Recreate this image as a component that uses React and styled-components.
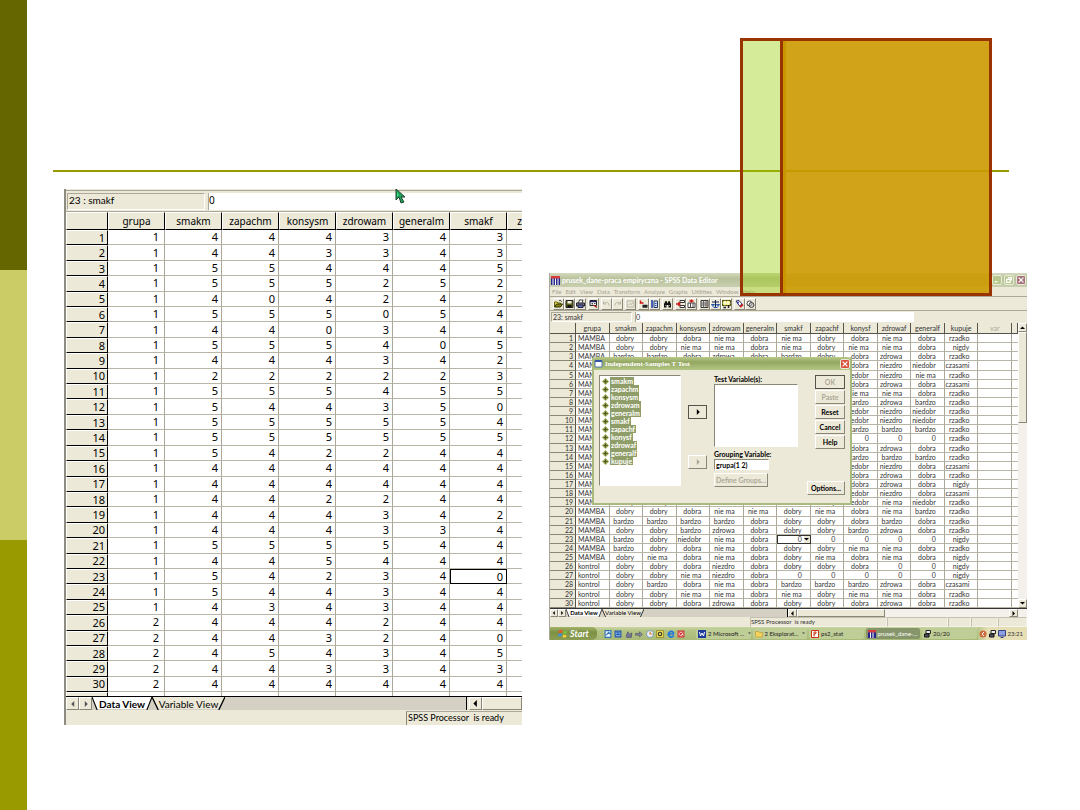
import React from "react";
import styled, { createGlobalStyle } from "styled-components";

const GlobalStyle = createGlobalStyle`
  body {
    margin: 0;
    background: #ffffff;
  }
  *, *::before, *::after {
    box-sizing: border-box;
  }
  button, input, select {
    margin: 0;
    padding: 0;
    border: none;
    border-radius: 0;
    font: inherit;
    color: inherit;
  }
`;

/* smakm zapachm konsysm zdrowam generalm smakf zapachf konysf zdrowaf generalf */
const ANSWERS = [
  "4443434434", "4433434334", "5544454444", "5552524422", "4042424223",
  "5550544444", "4403444334", "5554054545", "4443424222", "2222234222",
  "5554554555", "5443504000", "5555544444", "5555554555", "5422444224",
  "4444444444", "4444444444", "4422444224", "4443424232", "4443343435",
  "5555444454", "4454444544", "5423400000", "5443444334", "4343443434",
  "4442444400", "4432400000", "4543455544", "4433434334", "4444444444",
];

const BUYS =
  "rnrcrcrrrrrrrrcrncrrrrnrnnncrr".split("").map((c) => ({ r: "rzadko", n: "nigdy", c: "czasami" }[c]));

const VARIABLES = [
  "smakm", "zapachm", "konsysm", "zdrowam", "generalm",
  "smakf", "zapachf", "konysf", "zdrowaf", "generalf",
];

const labelFor = (variable, value) => {
  const health = variable.startsWith("zdrow");
  const taste = variable.startsWith("smak") || variable.startsWith("zapach");
  if (value === "5") return "bardzo";
  if (value === "4") return health ? "zdrowa" : taste ? "dobry" : "dobra";
  if (value === "3") return "nie ma";
  if (value === "2") return health ? "niezdro" : "niedobr";
  return "0";
};

/* ---------- slide ---------- */

const Slide = styled.div`
  display: flex;
  min-height: 100vh;
  background: #ffffff;
  color: #000000;
  font-family: Lato, "Noto Sans", sans-serif;
`;

const Stripe = styled.div`
  display: flex;
  flex-direction: column;
  flex: 0 0 27px;
`;

const StripePart = styled.div`
  flex: 1;
  background: ${(props) => props.$color};
`;

const Main = styled.main`
  position: relative;
  flex: 1;
  min-width: 0;
`;

const TitleArea = styled.header`
  height: 172px;
  margin: 0 71px 0 26px;
  border-bottom: 2px solid #999900;
`;

const Figures = styled.div`
  display: grid;
  grid-template-columns: minmax(0, 458fr) minmax(0, 478fr);
  align-items: start;
  gap: 27px;
  padding: 17px 53px 0 37px;
`;

const Decoration = styled.div`
  position: absolute;
  top: 38px;
  right: 88px;
  display: flex;
  width: 252px;
  height: 258px;
  border: 3px solid #993300;
`;

const GreenPart = styled.div`
  flex: 0 0 37px;
  background: rgba(153, 204, 0, 0.4);
`;

const OrangePart = styled.div`
  flex: 1;
  border-left: 3px solid #993300;
  background: rgba(204, 153, 0, 0.9);
  box-shadow: inset 3px 0 0 #c89600;
`;

/* ---------- shared sheet parts ---------- */

const Sheet = styled.table`
  border-collapse: separate;
  border-spacing: 0;
  table-layout: fixed;
  background: #ffffff;

  th, td {
    padding: 0;
    overflow: hidden;
    white-space: nowrap;
  }
  td {
    border-right: 1px solid #aca899;
    border-bottom: 1px solid #b9b6a8;
    text-align: right;
  }
  th {
    background: #ece9d8;
    font-weight: 400;
  }
`;

const Clip = styled.div`
  flex: 1;
  min-width: 0;
  height: ${(props) => props.$height}px;
  overflow: hidden;
`;

const Bevel = styled.button`
  display: flex;
  align-items: center;
  justify-content: center;
  flex: none;
  width: ${(props) => props.$w}px;
  height: ${(props) => props.$h}px;
  background: #ece9d8;
  border: 1px solid;
  border-color: #ffffff #8a8776 #8a8776 #ffffff;
`;

const Triangle = ({ dir, size = 5, color = "#000000" }) => {
  const paths = {
    left: "M7 0V10L2 5Z",
    right: "M3 0V10L8 5Z",
    up: "M0 8H10L5 3Z",
    down: "M0 2H10L5 7Z",
  };
  return (
    <svg width={size} height={size} viewBox="0 0 10 10" aria-hidden="true">
      <path d={paths[dir]} fill={color} />
    </svg>
  );
};

/* ---------- large sheet on the left ---------- */

const LeftPane = styled.section`
  position: relative;
  overflow: hidden;
  padding-top: 3px;
  border-left: 2px solid #8e8b80;
  background: #ece9d8;
  box-shadow: inset 0 1px 0 #ece9d8, inset 0 2px 0 #aca899;
  font-size: 11px;
  line-height: 14px;
`;

const LeftEntry = styled.div`
  display: flex;
  gap: 3px;
  height: 20px;
  padding: 1px 0 1px 1px;
  border-bottom: 1px solid #aca899;
  font-size: 10px;
  line-height: 12px;
`;

const EntryName = styled.label`
  flex: 0 0 ${(props) => props.$width}px;
  padding-left: 1px;
  border: 1px solid;
  border-color: #aca899 #ffffff #ffffff #aca899;
`;

const LeftEntryInput = styled.input`
  flex: 1;
  min-width: 0;
  padding-bottom: 4px;
  border-left: 1px solid #aca899;
  background: #ffffff;
  font-family: "Noto Sans", sans-serif;
`;

const LeftSheet = styled(Sheet)`
  width: 498px;
  height: 496px;
  font-family: "Noto Sans", sans-serif;
  line-height: 12px;

  thead th {
    height: 18px;
    border: 1px solid;
    border-color: #ffffff #000000 #000000 #ffffff;
    font-size: 10px;
  }
  tbody th {
    height: 15px;
    padding-right: 2px;
    border: 1px solid;
    border-color: #ffffff #000000 #000000 #ffffff;
    text-align: right;
  }
`;

const LeftCell = styled.td`
  && {
    height: 15px;
    padding-right: ${(props) => (props.$group ? 5 : 3)}px;
    ${(props) => props.$active && "border: 1px solid #000000;"}
  }
`;

const LeftTabs = styled.div`
  display: flex;
  height: 14px;
  border-top: 1px solid #000000;
  background: #d4d0c4;
  font-size: 10px;
`;

const TabButton = styled.button`
  position: relative;
  display: flex;
  align-items: center;
  flex: none;
  width: ${(props) => props.$width}px;
  background: none;
  font-weight: ${(props) => (props.$active ? 700 : 400)};
  justify-content: center;
  white-space: nowrap;

  svg {
    position: absolute;
    inset: 0;
    width: 100%;
    height: 100%;
  }
  span {
    position: relative;
  }
`;

const SheetTab = ({ width, active, children }) => (
  <TabButton type="button" $width={width} $active={active}>
    <svg viewBox="0 0 70 14" preserveAspectRatio="none" aria-hidden="true">
      <path d="M0 0L6 13H64L70 0Z" fill={active ? "#ffffff" : "#ece9d8"} />
      <path d="M0 0L6 14M64 14L70 0" stroke="#000000" strokeWidth="1.3" fill="none" />
    </svg>
    <span>{children}</span>
  </TabButton>
);

const TabSpace = styled.div`
  flex: 1;
  border-right: 1px solid #000000;
`;

const LeftScroll = styled.div`
  display: flex;
  flex: 0 0 55px;
  padding-left: 2px;
  background: #ece9d8;
`;

const ScrollThumb = styled.div`
  flex: 1;
  border: 1px solid;
  border-color: #ffffff #8a8776 #8a8776 #ffffff;
  background: #ece9d8;
`;

const LeftStatus = styled.div`
  display: flex;
  justify-content: flex-end;
  height: 15px;
  padding-top: 1px;
`;

const LeftStatusText = styled.div`
  flex: 0 0 116px;
  padding-left: 1px;
  border-top: 1px solid #aca899;
  border-left: 1px solid #8a8776;
  font-size: 9px;
  line-height: 12px;
  white-space: pre;
`;

const Pointer = styled.svg`
  position: absolute;
  top: 0;
  left: 329px;
`;

const DataView = () => (
  <LeftPane>
    <LeftEntry>
      <EntryName $width={138} htmlFor="cell-left">23 : smakf</EntryName>
      <LeftEntryInput id="cell-left" defaultValue="0" />
    </LeftEntry>
    <Clip $height={484}>
      <LeftSheet>
        <colgroup>
          <col style={{ width: 42 }} />
          {Array.from({ length: 8 }, (_, i) => <col key={i} />)}
        </colgroup>
        <thead>
          <tr>
            <th />
            {["grupa", ...VARIABLES.slice(0, 7)].map((name) => <th key={name}>{name}</th>)}
          </tr>
        </thead>
        <tbody>
          {ANSWERS.map((row, i) => (
            <tr key={i}>
              <th>{i + 1}</th>
              <LeftCell $group>{i < 25 ? 1 : 2}</LeftCell>
              {row.slice(0, 6).split("").map((value, j) => (
                <LeftCell key={j} $active={i === 22 && j === 5}>{value}</LeftCell>
              ))}
              <LeftCell />
            </tr>
          ))}
          <tr>
            <th />
            {Array.from({ length: 8 }, (_, i) => <LeftCell key={i} />)}
          </tr>
        </tbody>
      </LeftSheet>
    </Clip>
    <LeftTabs>
      <Bevel type="button" aria-label="Previous sheet" $w={13} $h={13}>
        <Triangle dir="left" size={6} color="#555555" />
      </Bevel>
      <Bevel type="button" aria-label="Next sheet" $w={13} $h={13}>
        <Triangle dir="right" size={6} color="#555555" />
      </Bevel>
      <SheetTab width={60} active>Data View</SheetTab>
      <SheetTab width={73}>Variable View</SheetTab>
      <TabSpace />
      <LeftScroll>
        <Bevel type="button" aria-label="Scroll left" $w={13} $h={13}>
          <Triangle dir="left" size={7} />
        </Bevel>
        <ScrollThumb />
      </LeftScroll>
    </LeftTabs>
    <LeftStatus>
      <LeftStatusText>SPSS Processor  is ready</LeftStatusText>
    </LeftStatus>
    <Pointer width="11" height="15" viewBox="0 0 11 15" aria-hidden="true">
      <path d="M1 0V11L4 8L6 14L9 13L6 8H10Z" fill="#1fa05a" stroke="#20452c" />
      <path d="M2 3V8L4 6Z" fill="#3ddc84" />
    </Pointer>
  </LeftPane>
);

/* ---------- small editor window on the right ---------- */

const EditorWindow = styled.section`
  position: relative;
  margin-top: 84px;
  border-left: 1px solid #aca899;
  background: #ece9d8;
  color: #333333;
  font-size: 7px;
  line-height: 8px;
`;

const TitleBar = styled.div`
  display: flex;
  align-items: center;
  gap: 2px;
  height: 14px;
  padding: 0 1px;
  background: linear-gradient(#d3d9bd, #b9c29c 40%, #c8cfb0);
  color: #ffffff;
  font-weight: 700;
`;

const Grow = styled.span`
  flex: 1;
`;

const CaptionButton = styled.button`
  display: flex;
  align-items: center;
  justify-content: center;
  width: 10px;
  height: 10px;
  border: 1px solid #e8ecd9;
  border-radius: 2px;
  background: ${(props) => props.$color};
`;

const MenuBar = styled.nav`
  display: flex;
  gap: 4px;
  height: 10px;
  padding: 0 2px;
  border-bottom: 1px solid #aca899;
  color: #a5a294;
  font-size: 6px;

  button {
    background: none;
  }
`;

const ToolBar = styled.div`
  display: flex;
  align-items: center;
  gap: 2px;
  height: 14px;
  padding-left: 3px;
  border-bottom: 1px solid #aca899;
`;

const ToolGroup = styled.div`
  display: flex;
`;

const ToolIcon = ({ name, label }) => (
  <Bevel type="button" aria-label={label} $w={11} $h={12}>
    <svg width="9" height="10" viewBox="0 0 18 18" fill="none" strokeWidth="2" aria-hidden="true">
      {ICONS[name]}
    </svg>
  </Bevel>
);

const ICONS = {
  open: (
    <>
      <path d="M1 15V5H6L8 7H13V9" fill="#e8e060" stroke="#6b6600" />
      <path d="M1 15L5 9H17L13 15Z" fill="#8a8410" stroke="#333300" />
      <path d="M10 3C12 1 14 2 15 4" stroke="#222222" />
    </>
  ),
  save: (
    <>
      <path d="M2 2H16V16H2Z" fill="#5f6215" stroke="#222222" />
      <path d="M5 3H13V8H5Z" fill="#f2f0e6" />
      <path d="M5 11H13V16H5Z" fill="#111111" />
    </>
  ),
  print: (
    <>
      <path d="M5 7L7 1H14L12 7" fill="#ffffff" stroke="#444444" />
      <path d="M1 7H17V13H1Z" fill="#777788" stroke="#222233" />
      <path d="M4 11H14V16H4Z" fill="#6573b5" stroke="#222244" />
    </>
  ),
  recall: (
    <>
      <path d="M2 2H15V12H2Z" fill="#ffffff" stroke="#222222" />
      <path d="M2 4H15" stroke="#222266" strokeWidth="3" />
      <path d="M5 8H8M10 8H13M5 11H8" stroke="#444444" />
      <path d="M9 11L16 16" stroke="#aa2222" strokeWidth="3" />
    </>
  ),
  undo: <path d="M3 4V9H8M3 9C6 5 14 4 14 12" stroke="#b8b5a5" />,
  redo: <path d="M15 4V9H10M15 9C12 5 4 4 4 12" stroke="#b8b5a5" />,
  chart: <path d="M2 3H16V15H2ZM4 12L8 8L11 10L14 6" stroke="#b8b5a5" />,
  gotoCase: (
    <>
      <path d="M3 2V7H9" stroke="#cc1111" strokeWidth="3" />
      <path d="M7 12H17M7 15H17" stroke="#222222" strokeWidth="3" />
    </>
  ),
  variables: (
    <>
      <path d="M4 1V17" stroke="#1133aa" strokeWidth="3" />
      <path d="M8 3H15V16H8Z" fill="#dce6ff" stroke="#223366" />
      <path d="M10 8H13M10 12H13" stroke="#2244bb" />
    </>
  ),
  find: (
    <>
      <path d="M2 16V9L5 3H7L9 8L11 3H13L16 9V16H11V11H7V16Z" fill="#111111" />
      <path d="M4 12H5M13 12H14" stroke="#ffffff" />
    </>
  ),
  insertCase: (
    <>
      <path d="M8 2H17V6H8ZM8 12H17V16H8Z" fill="#ffffff" stroke="#333333" />
      <path d="M0 9H9M6 5V13" stroke="#cc1111" strokeWidth="3" />
    </>
  ),
  insertVariable: (
    <>
      <path d="M2 7H16V16H2ZM7 7V16M12 7V16" fill="#ffffff" stroke="#444444" />
      <path d="M9 0V6M5 3H13" stroke="#cc1111" strokeWidth="3" />
    </>
  ),
  split: (
    <>
      <path d="M2 2H16V16H2Z" fill="#e8e6dc" stroke="#333333" />
      <path d="M2 7H16M2 11H16M7 2V16M12 2V16" stroke="#666666" />
    </>
  ),
  weight: (
    <>
      <path d="M9 1V15M2 5H16" stroke="#112255" />
      <path d="M1 10H7L4 14ZM11 10H17L14 14ZM5 16H13" stroke="#2255aa" fill="#ffffff" />
    </>
  ),
  select: (
    <>
      <path d="M1 2H17V12H1Z" fill="#e9e04c" stroke="#444400" />
      <path d="M1 7H17M6 2V12M12 2V12" stroke="#ffffff" />
      <path d="M3 16H8M13 11V17" stroke="#222222" strokeWidth="3" />
    </>
  ),
  labels: (
    <>
      <path d="M2 3L8 2L14 9L9 13Z" fill="#ffffff" stroke="#333366" />
      <circle cx="6" cy="6" r="2" fill="#2233aa" />
      <path d="M10 15L16 10" stroke="#cc2222" strokeWidth="4" />
    </>
  ),
  sets: (
    <>
      <circle cx="7" cy="8" r="5" fill="#ffffff" stroke="#444444" />
      <circle cx="11" cy="11" r="5" fill="#bbbbbb" fillOpacity="0.6" stroke="#444444" />
    </>
  ),
};

const TOOLS = [
  [["open", "Open File"], ["save", "Save File"], ["print", "Print"]],
  [["recall", "Dialog Recall"]],
  [["undo", "Undo"], ["redo", "Redo"]],
  [["chart", "Goto Chart"]],
  [["gotoCase", "Goto Case"], ["variables", "Variables"]],
  [["find", "Find"]],
  [["insertCase", "Insert Case"], ["insertVariable", "Insert Variable"]],
  [["split", "Split File"], ["weight", "Weight Cases"], ["select", "Select Cases"]],
  [["labels", "Value Labels"], ["sets", "Use Sets"]],
];

const EntryBar = styled.div`
  display: flex;
  gap: 3px;
  height: 12px;
  padding: 1px 113px 1px 1px;
`;

const EntryInput = styled.input`
  flex: 1;
  min-width: 0;
  border-left: 1px solid #aca899;
  background: #ffffff;
`;

const SheetRow = styled.div`
  display: flex;
`;

const SmallSheet = styled(Sheet)`
  width: 100%;
  height: 294px;

  thead th {
    height: 11px;
    border-right: 1px solid #55534a;
    border-bottom: 1px solid #55534a;
  }
  thead th:nth-last-child(2) {
    color: #aca899;
  }
  tbody th {
    height: 9px;
    padding-right: 2px;
    border-right: 1px solid #55534a;
    border-bottom: 1px solid #8a8776;
    text-align: right;
  }
  td {
    height: 9px;
    padding-right: 8px;
  }
`;

const GroupCell = styled.td`
  && {
    padding: 0 0 0 2px;
    text-align: left;
  }
`;

const EditCell = styled.td`
  && {
    padding: 0;
    border: 1px solid #333333;
  }
`;

const CellEditor = styled.div`
  display: flex;
  height: 7px;
`;

const CellSelect = styled.select`
  flex: 1;
  min-width: 0;
  appearance: none;
  background: #ffffff;
  text-align-last: right;
  padding-right: 2px;
  line-height: 7px;
`;

const SelectArrow = styled.span`
  display: flex;
  align-items: center;
  justify-content: center;
  flex: 0 0 6px;
  background: #ece9d8;
`;

const VScroll = styled.div`
  display: flex;
  flex-direction: column;
  flex: 0 0 9px;
  background: #f4f1ec;
`;

const VThumb = styled(ScrollThumb)`
  flex: 0 0 91px;
`;

const SmallTabs = styled.div`
  display: flex;
  height: 9px;
  background: #d4d0c4;
  border-top: 1px solid #333333;
  color: #000000;
  font-size: 6px;
`;

const SmallScroll = styled.div`
  display: flex;
  flex: 0 0 239px;
  padding-right: 9px;
  background: #f4f1ec;
`;

const HThumb = styled(ScrollThumb)`
  flex: 0 0 88px;
  margin-right: auto;
`;

const SmallStatus = styled.div`
  display: flex;
  height: 10px;
  padding-left: 200px;
  font-size: 6px;
`;

const StatusBox = styled.div`
  flex: ${(props) => props.$flex};
  min-width: 0;
  border: 1px solid;
  border-color: #c5c1b0 #f5f3ea #f5f3ea #c5c1b0;
  white-space: pre;
`;

const SmallEditor = () => (
  <>
    <TitleBar>
      <svg width="9" height="9" viewBox="0 0 18 18" aria-hidden="true">
        <path d="M0 0H18V18H0Z" fill="#26268c" />
        <path d="M0 0H18V5H0Z" fill="#d93c3c" />
        <path d="M4 5V18M9 5V18M14 5V18" stroke="#ffffff" strokeWidth="2" />
      </svg>
      prusek_dane-praca empiryczna - SPSS Data Editor
      <Grow />
      <CaptionButton type="button" aria-label="Minimize" $color="#b7c98f">
        <svg width="6" height="6" viewBox="0 0 10 10"><path d="M1 8H6" stroke="#ffffff" strokeWidth="2" /></svg>
      </CaptionButton>
      <CaptionButton type="button" aria-label="Restore" $color="#b7c98f">
        <svg width="6" height="6" viewBox="0 0 10 10"><path d="M3 1H9V6M1 4H7V9H1Z" fill="none" stroke="#ffffff" strokeWidth="2" /></svg>
      </CaptionButton>
      <CaptionButton type="button" aria-label="Close" $color="#a8727a">
        <svg width="6" height="6" viewBox="0 0 10 10"><path d="M1 1L9 9M9 1L1 9" stroke="#ffffff" strokeWidth="2" /></svg>
      </CaptionButton>
    </TitleBar>
    <MenuBar>
      {["File", "Edit", "View", "Data", "Transform", "Analyze", "Graphs", "Utilities", "Window", "Help"].map((m) => (
        <button type="button" key={m}>{m}</button>
      ))}
    </MenuBar>
    <ToolBar>
      {TOOLS.map((group, i) => (
        <ToolGroup key={i}>
          {group.map(([name, label]) => <ToolIcon key={name} name={name} label={label} />)}
        </ToolGroup>
      ))}
    </ToolBar>
    <EntryBar>
      <EntryName $width={81} htmlFor="cell-right">23: smakf</EntryName>
      <EntryInput id="cell-right" defaultValue="0" />
    </EntryBar>
    <SheetRow>
      <Clip $height={285}>
        <SmallSheet>
          <colgroup>
            <col style={{ width: 26 }} />
            {Array.from({ length: 13 }, (_, i) => <col key={i} />)}
            <col style={{ width: 6 }} />
          </colgroup>
          <thead>
            <tr>
              <th />
              {["grupa", ...VARIABLES, "kupuje", "var"].map((name) => <th key={name}>{name}</th>)}
              <th />
            </tr>
          </thead>
          <tbody>
            {ANSWERS.map((row, i) => (
              <tr key={i}>
                <th>{i + 1}</th>
                <GroupCell>{i < 25 ? "MAMBA" : "kontrol"}</GroupCell>
                {VARIABLES.map((name, j) =>
                  i === 22 && j === 5 ? (
                    <EditCell key={name}>
                      <CellEditor>
                        <CellSelect aria-label="smakf" defaultValue="0">
                          <option>0</option>
                          <option>dobry</option>
                          <option>bardzo</option>
                        </CellSelect>
                        <SelectArrow><Triangle dir="down" /></SelectArrow>
                      </CellEditor>
                    </EditCell>
                  ) : (
                    <td key={name}>{labelFor(name, row[j])}</td>
                  )
                )}
                <td>{BUYS[i]}</td>
                <td />
                <LastCell />
              </tr>
            ))}
            <tr>
              <th />
              {Array.from({ length: 13 }, (_, i) => <td key={i} />)}
              <LastCell />
            </tr>
          </tbody>
        </SmallSheet>
      </Clip>
      <VScroll>
        <Bevel type="button" aria-label="Scroll up" $w={9} $h={9}><Triangle dir="up" /></Bevel>
        <VThumb />
        <Grow />
        <Bevel type="button" aria-label="Scroll down" $w={9} $h={9}><Triangle dir="down" /></Bevel>
      </VScroll>
    </SheetRow>
    <SmallTabs>
      <Bevel type="button" aria-label="Previous sheet" $w={8} $h={8}><Triangle dir="left" size={4} /></Bevel>
      <Bevel type="button" aria-label="Next sheet" $w={8} $h={8}><Triangle dir="right" size={4} /></Bevel>
      <SheetTab width={36} active>Data View</SheetTab>
      <SheetTab width={42}>Variable View</SheetTab>
      <TabSpace />
      <SmallScroll>
        <Bevel type="button" aria-label="Scroll left" $w={9} $h={8}><Triangle dir="left" /></Bevel>
        <HThumb />
        <Bevel type="button" aria-label="Scroll right" $w={9} $h={8}><Triangle dir="right" /></Bevel>
      </SmallScroll>
    </SmallTabs>
    <SmallStatus>
      <StatusBox $flex="1">SPSS Processor  is ready</StatusBox>
      <StatusBox $flex="0 0 61px" />
      <StatusBox $flex="0 0 23px" />
      <StatusBox $flex="0 0 27px" />
      <StatusBox $flex="0 0 29px" />
    </SmallStatus>
  </>
);

const LastCell = styled.td`
  && {
    padding: 0;
    border-right: none;
  }
`;

/* ---------- t test dialog ---------- */

const Dialog = styled.div`
  position: absolute;
  top: 84px;
  left: 42px;
  width: 260px;
  border: 2px solid #a9ba7c;
  border-top: none;
  border-radius: 3px 3px 0 0;
  background: #ece9d8;
  color: #000000;
  font-weight: 700;
`;

const DialogTitle = styled.div`
  display: flex;
  align-items: center;
  gap: 2px;
  height: 13px;
  border-radius: 3px 3px 0 0;
  background: linear-gradient(#b9c98a, #93a761 40%, #b4c584);
  color: #ffffff;
  font-family: "Liberation Serif", serif;
`;

const DialogBody = styled.div`
  display: flex;
  min-height: 133px;
  padding: 5px 5px 8px 5px;
`;

const SourceList = styled.ul`
  flex: 0 0 82px;
  height: 111px;
  margin: 0 7px 0 0;
  padding: 1px 0 0 2px;
  border: 1px solid;
  border-color: #8a8776 #ffffff #ffffff #8a8776;
  background: #ffffff;
  color: #ffffff;
  list-style: none;

  li {
    display: flex;
    align-items: center;
    gap: 1px;
    height: 8px;
  }
  span {
    padding: 0 1px;
    background: #8f9e69;
  }
`;

const MoveColumn = styled.div`
  display: flex;
  flex-direction: column;
  gap: 36px;
  margin-right: 7px;
  padding-top: 30px;
`;

const Targets = styled.div`
  display: flex;
  flex-direction: column;
  align-items: flex-start;
  flex: 0 0 84px;
`;

const TestBox = styled.div`
  width: 84px;
  height: 63px;
  margin: 1px 0 3px;
  border: 1px solid;
  border-color: #8a8776 #ffffff #ffffff #8a8776;
  background: #ffffff;
`;

const GroupInput = styled.input`
  width: 55px;
  height: 11px;
  margin: 1px 0 3px;
  padding-left: 1px;
  border: 1px solid;
  border-color: #8a8776 #ffffff #ffffff #8a8776;
  background: #ffffff;
`;

const DialogButton = styled(Bevel)`
  width: ${(props) => props.$w}px;
  height: 14px;
  color: ${(props) => (props.disabled ? "#aca899" : "#000000")};
  border-color: ${(props) => (props.$default ? "#55534a" : "#ffffff #8a8776 #8a8776 #ffffff")};
`;

const Actions = styled.div`
  display: flex;
  flex-direction: column;
  align-items: flex-end;
  flex: 1;
  gap: 1px;
`;

const TTestDialog = () => (
  <Dialog role="dialog" aria-label="Independent-Samples T Test">
    <DialogTitle>
      <svg width="9" height="8" viewBox="0 0 9 8" aria-hidden="true">
        <path d="M1 1H8V7H1Z" fill="#ffffff" stroke="#5577aa" />
        <path d="M1 1H8" stroke="#3355aa" strokeWidth="2" />
      </svg>
      Independent-Samples T Test
      <Grow />
      <CaptionButton type="button" aria-label="Close dialog" $color="#d9513a">
        <svg width="6" height="6" viewBox="0 0 10 10"><path d="M1 1L9 9M9 1L1 9" stroke="#ffffff" strokeWidth="2" /></svg>
      </CaptionButton>
    </DialogTitle>
    <DialogBody>
      <SourceList aria-label="Variables">
        {[...VARIABLES, "kupuje"].map((name) => (
          <li key={name}>
            <svg width="7" height="7" viewBox="0 0 14 14" aria-hidden="true">
              <path d="M7 0L14 7L7 14L0 7Z" fill="#9aa557" />
              <path d="M7 3V11M3 7H11" stroke="#4f5a1f" strokeWidth="2" />
            </svg>
            <span>{name}</span>
          </li>
        ))}
      </SourceList>
      <MoveColumn>
        <DialogButton type="button" aria-label="Move to test variables" $w={19} $default><Triangle dir="right" size={6} /></DialogButton>
        <DialogButton type="button" aria-label="Move to grouping variable" $w={19} disabled>
          <Triangle dir="right" size={6} color="#aca899" />
        </DialogButton>
      </MoveColumn>
      <Targets>
        <div>Test Variable(s):</div>
        <TestBox />
        <label htmlFor="grouping">Grouping Variable:</label>
        <GroupInput id="grouping" defaultValue="grupa(1 2)" />
        <DialogButton type="button" $w={54} disabled>Define Groups...</DialogButton>
      </Targets>
      <Actions>
        <DialogButton type="button" $w={30} $default disabled>OK</DialogButton>
        <DialogButton type="button" $w={30} disabled>Paste</DialogButton>
        <DialogButton type="button" $w={30}>Reset</DialogButton>
        <DialogButton type="button" $w={30}>Cancel</DialogButton>
        <DialogButton type="button" $w={30}>Help</DialogButton>
        <Grow />
        <DialogButton type="button" $w={38}>Options...</DialogButton>
      </Actions>
    </DialogBody>
  </Dialog>
);

/* ---------- taskbar ---------- */

const TaskBar = styled.div`
  display: flex;
  align-items: stretch;
  height: 13px;
  background: linear-gradient(#cbd6a4, #b3c383 30%, #a9ba78);
`;

const StartButton = styled.button`
  display: flex;
  align-items: center;
  justify-content: center;
  gap: 2px;
  flex: 0 0 47px;
  border-radius: 0 5px 5px 0;
  background: linear-gradient(#a3b36b, #7d9144 40%, #8a9d53);
  color: #ffffff;
  font-size: 9px;
  font-style: italic;
  font-weight: 700;
`;

const QuickLaunch = styled.div`
  display: flex;
  align-items: center;
  justify-content: space-between;
  flex: 0 1 98px;
  padding: 0 10px 0 7px;
`;

const Task = styled.button`
  display: flex;
  align-items: center;
  gap: 2px;
  flex: 1 1 0;
  min-width: 0;
  margin: 1px;
  padding: 0 2px;
  border-radius: 2px;
  background: ${(props) => (props.$active ? "#87966a" : "#bfcd96")};
  color: ${(props) => (props.$active ? "#ffffff" : "#222222")};
  font-size: 6px;
  white-space: nowrap;

  svg {
    flex: none;
  }
`;

const Tray = styled.div`
  display: flex;
  align-items: center;
  gap: 2px;
  flex: 0 0 49px;
  padding: 0 4px 0 1px;
  background: linear-gradient(90deg, #b9c78c, #e6dfb5 20%);
  font-size: 6px;
`;

const MonitorIcon = () => (
  <svg width="7" height="8" viewBox="0 0 14 16" aria-hidden="true">
    <path d="M4 1H13V7H4Z" fill="#eeeeee" stroke="#222222" strokeWidth="2" />
    <path d="M1 8H10V14H1Z" fill="#555566" stroke="#111111" strokeWidth="2" />
  </svg>
);

const QUICK = [
  <path d="M2 1H12V13H2ZM4 9L8 4L12 8" fill="#f4f8ff" stroke="#3377bb" strokeWidth="2" />,
  <path d="M2 2H12V12H2ZM4 5H10M4 8H10" fill="#9cc4ee" stroke="#2255aa" strokeWidth="2" />,
  <path d="M2 10L5 3L8 8L12 5L11 13H3Z" fill="#777799" stroke="#444466" />,
  <path d="M1 6H8V3L13 8L8 12V9H1Z" fill="#8890a8" stroke="#444455" />,
  <><circle cx="7" cy="7" r="6" fill="#eef4ff" stroke="#4477aa" /><path d="M7 3V7H11" stroke="#dd7722" strokeWidth="2" fill="none" /></>,
  <><path d="M1 1H13V13H1Z" fill="#f2e258" stroke="#776600" /><circle cx="7" cy="7" r="3" fill="none" stroke="#333333" strokeWidth="2" /></>,
  <path d="M12 10C5 16 0 8 4 4C8 0 13 4 11 7H4" fill="none" stroke="#2277dd" strokeWidth="3" />,
  <path d="M2 2H12V12H2ZM4 10L10 4M4 4L10 10" fill="#ffdddd" stroke="#cc3333" strokeWidth="2" />,
];

const WindowsTaskBar = () => (
  <TaskBar>
    <StartButton type="button">
      <svg width="10" height="9" viewBox="0 0 20 18" aria-hidden="true">
        <path d="M2 3Q6 0 9 3L8 8Q5 6 1 8Z" fill="#e8562a" />
        <path d="M11 4Q15 6 19 3L17 9Q13 11 10 9Z" fill="#7bc143" />
        <path d="M1 10Q5 8 8 10L7 15Q4 13 0 15Z" fill="#3f8fe0" />
        <path d="M10 11Q13 13 17 11L16 16Q12 18 9 16Z" fill="#f8cf36" />
      </svg>
      Start
    </StartButton>
    <QuickLaunch>
      {QUICK.map((icon, i) => (
        <svg key={i} width="8" height="8" viewBox="0 0 14 14" aria-hidden="true">{icon}</svg>
      ))}
    </QuickLaunch>
    <Task type="button">
      <svg width="8" height="8" viewBox="0 0 16 16" aria-hidden="true">
        <path d="M0 0H16V16H0Z" fill="#1d3b9c" />
        <path d="M3 4L5 12L8 6L11 12L13 4" stroke="#ffffff" strokeWidth="2" fill="none" />
      </svg>
      2 Microsoft ...
      <Grow />
      <Triangle dir="down" size={3} color="#444444" />
    </Task>
    <Task type="button">
      <svg width="8" height="8" viewBox="0 0 16 16" aria-hidden="true">
        <path d="M1 3H7L9 5H15V14H1Z" fill="#f4d35a" stroke="#b58b1b" />
      </svg>
      2 Eksplorat...
      <Grow />
      <Triangle dir="down" size={3} color="#444444" />
    </Task>
    <Task type="button">
      <svg width="8" height="8" viewBox="0 0 16 16" aria-hidden="true">
        <path d="M1 1H15V15H1Z" fill="#ffffff" stroke="#cc3311" strokeWidth="2" />
        <path d="M6 13V4H10Q12 7 6 9" stroke="#cc3311" strokeWidth="2" fill="none" />
      </svg>
      ps2_stat
    </Task>
    <Task type="button" $active>
      <svg width="8" height="8" viewBox="0 0 16 16" aria-hidden="true">
        <path d="M0 0H16V16H0Z" fill="#26268c" />
        <path d="M0 0H16V5H0Z" fill="#d93c3c" />
        <path d="M5 5V16M10 5V16" stroke="#ffffff" strokeWidth="2" />
      </svg>
      prusek_dane-...
    </Task>
    <Task type="button">
      <MonitorIcon />
      20/20
    </Task>
    <Tray>
      <svg width="8" height="8" viewBox="0 0 16 16" aria-hidden="true">
        <circle cx="8" cy="8" r="7" fill="#cf6a3c" />
        <path d="M10 4L6 8L10 12" stroke="#ffffff" strokeWidth="2" fill="none" />
      </svg>
      <MonitorIcon />
      <svg width="8" height="8" viewBox="0 0 16 16" aria-hidden="true">
        <path d="M1 1H15V12H1Z" fill="#8e9ee0" stroke="#33418a" strokeWidth="2" />
        <path d="M5 15H11" stroke="#33418a" strokeWidth="2" />
      </svg>
      23:21
    </Tray>
  </TaskBar>
);

const App = () => (
  <>
    <GlobalStyle />
    <Slide>
      <Stripe>
        <StripePart $color="#666600" />
        <StripePart $color="#cccc66" />
        <StripePart $color="#999900" />
      </Stripe>
      <Main>
        <TitleArea />
        <Figures>
          <DataView />
          <EditorWindow>
            <SmallEditor />
            <TTestDialog />
            <WindowsTaskBar />
          </EditorWindow>
        </Figures>
        <Decoration>
          <GreenPart />
          <OrangePart />
        </Decoration>
      </Main>
    </Slide>
  </>
);

export default App;
